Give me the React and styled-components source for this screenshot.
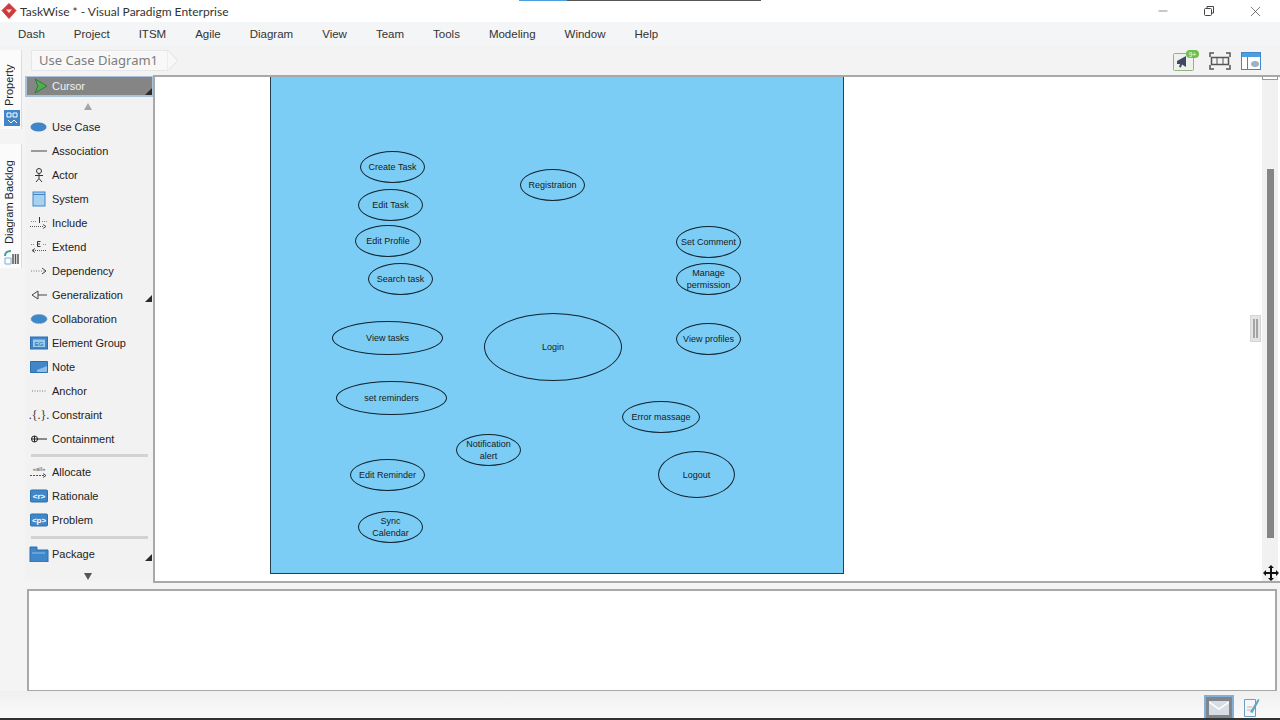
import styled, { createGlobalStyle } from "styled-components";
import { Minus, X } from "lucide-react";

const GlobalStyle = createGlobalStyle`
  html, body { margin: 0; padding: 0; width: 1280px; height: 720px; overflow: hidden; background: #fff; }
  * { box-sizing: border-box; }
  body { font-family: "Liberation Sans", Arial, sans-serif; color: #222; }
`;

const Page = styled.div`
  width: 1280px;
  height: 720px;
  display: flex;
  flex-direction: column;
  overflow: hidden;
  background: #f4f4f4;
`;

const TitleBar = styled.div`
  height: 22px;
  flex: none;
  background: #fff;
  display: flex;
  align-items: center;
  padding-left: 1px;
  position: relative;
`;

const TitleText = styled.span`
  font-family: "Lato", sans-serif;
  font-size: 12px;
  margin-left: 3px;
  color: #333;
`;

const WindowButtons = styled.div`
  margin-left: auto;
  padding-right: 2px;
  display: flex;
  align-items: center;
  color: #444;
`;

const WindowButton = styled.div`
  width: 46px;
  height: 22px;
  display: flex;
  align-items: center;
  justify-content: center;
`;

const ProgressMark = styled.div`
  position: absolute;
  top: 0;
  left: 519px;
  width: 242px;
  height: 1px;
  background: linear-gradient(90deg, #4a9fdc 0 48px, #555 48px);
`;

const MenuBar = styled.div`
  height: 24px;
  flex: none;
  background: #f4f5f6;
  display: flex;
  align-items: center;
  padding-left: 18px;
  gap: 29px;
  font-size: 11.5px;
  color: #333;
`;

const Toolbar = styled.div`
  height: 29px;
  flex: none;
  display: flex;
  align-items: center;
  padding-left: 31px;
  padding-right: 19px;
  background: #f3f3f3;
`;

const Crumb = styled.div`
  height: 21px;
  width: 136px;
  padding: 0 0 2px 7px;
  display: flex;
  align-items: center;
  font-family: "Noto Sans", sans-serif;
  font-size: 13px;
  color: #7d7d7d;
  background: #f8f8f8;
  border: 1px solid #e6e6e6;
  border-right: none;
`;

const CrumbTip = styled.svg`
  width: 11px;
  height: 21px;
  flex: none;
`;

const ToolIcons = styled.div`
  margin-left: auto;
  display: flex;
  align-items: center;
  gap: 10px;
`;

const Body = styled.div`
  height: 506px;
  flex: none;
  display: flex;
`;

const SideTabs = styled.div`
  width: 25px;
  flex: none;
  display: flex;
  flex-direction: column;
  margin-top: -25px;
  gap: 15px;
  position: relative;
  z-index: 1;
`;

const SideTab = styled.div`
  width: 22px;
  height: ${p => p.$h}px;
  background: #fbfbfb;
  border-right: 1px solid #dcdcdc;
  display: flex;
  flex-direction: column;
  align-items: center;
  padding-top: ${p => p.$pad}px;
`;

const SideTabLabel = styled.span`
  writing-mode: vertical-rl;
  transform: rotate(180deg);
  font-size: 11px;
  height: ${p => p.$h}px;
  margin-right: 4px;
  color: #222;
  text-align: left;
  white-space: nowrap;
`;

const TabIcon = styled.svg`
  flex: none;
  margin-top: ${p => p.$top}px;
  margin-left: 2px;
`;

const Palette = styled.div`
  width: 130px;
  flex: none;
  display: flex;
  flex-direction: column;
  background: #f2f2f2;
  border-right: 2px solid #a8a8a8;
`;

const CursorRow = styled.div`
  height: 21px;
  margin-top: 1px;
  flex: none;
  display: flex;
  align-items: center;
  background: #858585;
  border: 2px solid #a9c3dc;
  border-top-width: 1px;
  border-right-width: 1px;
  padding-left: 6px;
  gap: 4px;
  color: #f1f1f1;
  font-size: 11px;
  position: relative;
`;

const Corner = styled.i`
  position: absolute;
  right: ${p => p.$r ?? 0}px;
  bottom: ${p => p.$b ?? 0}px;
  width: 0;
  height: 0;
  border-style: solid;
  border-width: 0 0 7px 7px;
  border-color: transparent transparent #2c2c2c transparent;
`;

const Arrow = styled.div`
  height: ${p => p.$h}px;
  flex: none;
  display: flex;
  align-items: center;
  justify-content: center;
  padding-right: 2px;
`;

const ArrowGlyph = styled.i`
  width: 0;
  height: 0;
  border-left: 4px solid transparent;
  border-right: 4px solid transparent;
  ${p => p.$down ? "border-top: 7px solid #555;" : "border-bottom: 7px solid #a5a5a5;"}
`;

const Item = styled.div`
  height: 24px;
  flex: none;
  display: flex;
  align-items: center;
  font-size: 11px;
  color: #222;
  position: relative;
`;

const ItemIcon = styled.span`
  width: 27px;
  flex: none;
  display: flex;
  justify-content: center;
`;

const Divider = styled.div`
  height: 3px;
  flex: none;
  margin: ${p => p.$m};
  margin-left: 6px;
  margin-right: 5px;
  background: #d2d2d2;
`;

const Canvas = styled.div`
  flex: 1;
  position: relative;
  background: #fff;
  overflow: hidden;
  border-top: 2px solid #a8a8a8;
`;

const SystemBox = styled.div`
  position: absolute;
  left: 115px;
  top: -21px;
  width: 574px;
  height: 518px;
  background: #7bcdf5;
  border: 1px solid #24414f;
`;

const UseCase = styled.div`
  position: absolute;
  left: ${p => p.$x - 155}px;
  top: ${p => p.$y - 77}px;
  width: ${p => p.$w}px;
  height: ${p => p.$h}px;
  border: 1px solid #10232e;
  border-radius: 50%;
  background: #7bcdf5;
  display: flex;
  align-items: center;
  justify-content: center;
  text-align: center;
  white-space: pre-line;
  font-size: 9px;
  line-height: 12px;
  color: #1a1a1a;
`;

const ScrollTrack = styled.div`
  position: absolute;
  right: 2px;
  top: 0;
  bottom: 0;
  width: 16px;
  background: #f1f1f1;
`;

const ScrollThumb = styled.div`
  position: absolute;
  left: 5px;
  top: 92px;
  width: 7px;
  height: 369px;
  background: #858585;
`;

const TopCap = styled.div`
  position: absolute;
  left: 0;
  top: 0;
  width: 16px;
  height: 3px;
  border: 1px solid #999;
  border-top: none;
  background: #fff;
`;

const Grip = styled.div`
  position: absolute;
  left: 1095px;
  top: 238px;
  width: 11px;
  height: 27px;
  background: #e4e4e4;
  border: 1px solid #d5d5d5;
  display: flex;
  justify-content: center;
  gap: 1px;
  padding: 3px 0;
`;

const GripLine = styled.i`
  width: 2px;
  background: #a4a4a4;
`;

const MoveIcon = styled.svg`
  position: absolute;
  right: 1px;
  bottom: 0;
`;

const Gap = styled.div`
  height: 8px;
  flex: none;
  border-top: 2px solid #a8a8a8;
  margin-left: 153px;
  background: #f4f4f4;
`;

const LogRow = styled.div`
  height: 102px;
  flex: none;
  padding-left: 27px;
  padding-right: 3px;
`;

const LogBox = styled.div`
  height: 102px;
  background: #fff;
  border: 2px solid #a8a8a8;
  border-bottom-width: 1px;
`;

const StatusBar = styled.div`
  flex: 1;
  display: flex;
  align-items: flex-end;
  justify-content: flex-end;
  padding-right: 20px;
  gap: 10px;
  background: linear-gradient(#f0f0f0, #fafafa);
  border-bottom: 2px solid #333;
`;

const MailButton = styled.div`
  width: 30px;
  height: 23px;
  background: #80858c;
  border: 2px solid #83aed6;
  border-bottom: none;
  display: flex;
  align-items: center;
  justify-content: center;
`;

const DocIcon = styled.svg`
  margin-bottom: 1px;
`;

const items = [
  ["Use Case", "usecase"],
  ["Association", "line"],
  ["Actor", "actor"],
  ["System", "system"],
  ["Include", "include"],
  ["Extend", "extend"],
  ["Dependency", "dep"],
  ["Generalization", "gen", true],
  ["Collaboration", "collab"],
  ["Element Group", "group"],
  ["Note", "note"],
  ["Anchor", "anchor"],
  ["Constraint", "constraint"],
  ["Containment", "contain"],
];

const nodes = [
  ["Create Task", 360, 151, 65, 32],
  ["Registration", 520, 169, 65, 32],
  ["Edit Task", 358, 189, 65, 32],
  ["Edit Profile", 355, 225, 66, 32],
  ["Set Comment", 676, 226, 65, 32],
  ["Search task", 368, 263, 65, 32],
  ["Manage\npermission", 676, 263, 65, 32],
  ["View tasks", 332, 321, 111, 34],
  ["Login", 484, 313, 138, 68],
  ["View profiles", 676, 323, 65, 32],
  ["set reminders", 336, 381, 111, 34],
  ["Error massage", 622, 401, 78, 32],
  ["Notification\nalert", 456, 434, 65, 32],
  ["Edit Reminder", 350, 459, 75, 32],
  ["Logout", 658, 451, 77, 47],
  ["Sync\nCalendar", 358, 511, 65, 32],
];

const Icon = ({ name }) => {
  const blue = "#3f87c9";
  const props = { width: 20, height: 16, viewBox: "0 0 20 16", fill: "none" };
  switch (name) {
    case "usecase":
      return <svg {...props}><ellipse cx="9.500" cy="8" rx="8" ry="4.500" fill={blue} /></svg>;
    case "line":
      return <svg {...props}><path d="M2 8h16" stroke="#444" /></svg>;
    case "actor":
      return <svg {...props}><circle cx="10" cy="4" r="2.500" stroke="#333" /><path d="M10 6.500v5M6 8.500h8M10 11.500l-3 3.500M10 11.500l3 3.500" stroke="#333" /></svg>;
    case "system":
      return <svg {...props}><rect x="4" y="1" width="12" height="14" fill="#a9d0ef" stroke={blue} /><path d="M4 3.500h12" stroke={blue} /></svg>;
    case "include":
      return <svg {...props}><path d="M1 11.500h14" stroke="#555" strokeDasharray="1 1" /><path d="M14 9.500l3 2-3 2" stroke="#555" /><path d="M10.500 2v6" stroke="#333" /><path d="M2 6.500h5M13 6.500h5" stroke="#888" strokeDasharray="1 1" /></svg>;
    case "extend":
      return <svg {...props}><path d="M4 11.500h14" stroke="#555" strokeDasharray="1 1" /><path d="M6 9.500l-3 2 3 2" stroke="#555" /><path d="M8.500 2.500h3M8.500 2.500v5h3M8.500 5h2.500" stroke="#333" /><path d="M2 5.500h4M14 5.500h4" stroke="#888" strokeDasharray="1 1" /></svg>;
    case "dep":
      return <svg {...props}><path d="M2 8h14" stroke="#777" strokeDasharray="1 1.500" /><path d="M13 5l4 3-4 3" stroke="#444" /></svg>;
    case "gen":
      return <svg {...props}><path d="M9 4L3 8l6 4zM9 8h9" stroke="#444" /></svg>;
    case "collab":
      return <svg {...props}><ellipse cx="10" cy="8" rx="8" ry="4.500" fill={blue} stroke="#6ba4d8" strokeDasharray="1.500 1" /></svg>;
    case "group":
      return <svg {...props}><rect x="1.500" y="2" width="17" height="12" fill={blue} stroke="#2d6fae" /><rect x="4" y="4.500" width="12" height="7.500" fill="#9cc8ec" /><text x="10" y="10.500" fontSize="6" textAnchor="middle" fill="#1f5f99" fontFamily="Liberation Sans">EG</text></svg>;
    case "note":
      return <svg {...props}><path d="M1.500 2.500h17v11h-17z" fill={blue} stroke="#2d6fae" /><path d="M8 11l10-4v6H8z" fill="#8fbfe8" /></svg>;
    case "anchor":
      return <svg {...props}><path d="M3 8h15" stroke="#777" strokeDasharray="1 1.500" /></svg>;
    case "constraint":
      return <svg {...props}><text x="10" y="12" fontSize="12" textAnchor="middle" fill="#333" fontFamily="Liberation Serif">.{"{.}"}.</text></svg>;
    case "contain":
      return <svg {...props}><circle cx="5.500" cy="8" r="3" stroke="#222" /><path d="M2.500 8h6M5.500 5v6M8 8h10" stroke="#222" /></svg>;
    case "allocate":
      return <svg {...props}><text x="10" y="7" fontSize="6" textAnchor="middle" fill="#555" fontFamily="Liberation Sans">{"«all»"}</text><path d="M1 11.500h16" stroke="#555" strokeDasharray="2 1" /><path d="M14 9.500l3 2-3 2" stroke="#555" /></svg>;
    case "rationale":
    case "problem":
      return <svg {...props}><rect x="1.500" y="2" width="17" height="12" rx="1" fill={blue} stroke="#2d6fae" /><text x="10" y="11" fontSize="8" fontWeight="bold" textAnchor="middle" fill="#fff" fontFamily="Liberation Sans">{name === "problem" ? "<p>" : "<r>"}</text></svg>;
    case "package":
      return <svg {...props}><path d="M1 1h7v3h11v12H1z" fill={blue} stroke="#2d6fae" /><path d="M3 7h13" stroke="#8fbfe8" /></svg>;
    default:
      return null;
  }
};

const PaletteItem = ({ label, icon, more }) => (
  <Item>
    <ItemIcon><Icon name={icon} /></ItemIcon>
    {label}
    {more && <Corner $r={1} $b={5} />}
  </Item>
);

export default function App() {
  return (
    <Page>
      <GlobalStyle />
      <TitleBar>
        <svg width="16" height="16" viewBox="0 0 16 16">
          <path d="M8 .500l7 7-7 8-7-8z" fill="#cf3b3a" stroke="#cf3b3a" strokeLinejoin="round" />
          <path d="M5 6.500h6L8 10z" fill="#f7e6e0" />
        </svg>
        <TitleText>TaskWise * - Visual Paradigm Enterprise</TitleText>
        <ProgressMark />
        <WindowButtons>
          <WindowButton><Minus size={14} strokeWidth={1} /></WindowButton>
          <WindowButton>
            <svg width="12" height="12" viewBox="0 0 12 12" fill="none" stroke="#444">
              <rect x="1.500" y="3.500" width="7" height="7" rx="1" />
              <path d="M4 3.500V1.500h6.500V8H8.500" />
            </svg>
          </WindowButton>
          <WindowButton><X size={17} strokeWidth={1} /></WindowButton>
        </WindowButtons>
      </TitleBar>
      <MenuBar>
        {["Dash", "Project", "ITSM", "Agile", "Diagram", "View", "Team", "Tools", "Modeling", "Window", "Help"].map(m => (
          <span key={m}>{m}</span>
        ))}
      </MenuBar>
      <Toolbar>
        <Crumb>Use Case Diagram1</Crumb>
        <CrumbTip viewBox="0 0 11 21">
          <path d="M0 .500h1L10.500 10.500 1 20.500H0z" fill="#f8f8f8" stroke="#e2e2e2" />
        </CrumbTip>
        <ToolIcons>
          <svg width="26" height="22" viewBox="0 0 26 22" fill="none">
            <rect x=".5" y="3.500" width="20" height="17" rx="1" fill="#eef2ea" stroke="#92b283" />
            <path d="M4 11l9-5v11l-4-2.500-1 3-2-.5 1-3H4z" fill="#3d4a63" />
            <rect x="13" y="0" width="13" height="8" rx="4" fill="#6cc04a" />
            <text x="19.500" y="6.500" fontSize="6.500" textAnchor="middle" fill="#fff" fontFamily="Liberation Sans">9+</text>
          </svg>
          <svg width="22" height="18" viewBox="0 0 22 18" fill="none" stroke="#555">
            <path d="M1 5V1h4M17 1h4v4M21 13v4h-4M5 17H1v-4" strokeWidth="1.500" />
            <rect x="2.500" y="5.500" width="17" height="7" strokeWidth="1.500" />
            <path d="M8 5.500v7M14 5.500v7" />
          </svg>
          <svg width="20" height="18" viewBox="0 0 20 18" fill="none">
            <rect x=".5" y=".5" width="19" height="17" fill="#fff" stroke="#3f87c9" />
            <rect x="1" y="1" width="18" height="4" fill="#4a9fe0" />
            <path d="M6.500 5v12" stroke="#3f87c9" />
            <ellipse cx="14" cy="12" rx="4" ry="3" fill="#9ab2c4" />
          </svg>
        </ToolIcons>
      </Toolbar>
      <Body>
        <SideTabs>
          <SideTab $h={79} $pad={6}>
            <SideTabLabel $h={50}>Property</SideTabLabel>
            <TabIcon $top={4} width="16" height="16" viewBox="0 0 16 16">
              <rect width="16" height="16" fill="#3f87c9" />
              <path d="M3 3h4v4H3zM9 3h4v4H9zM4 10l3 3 3-3 3 3" fill="none" stroke="#fff" />
            </TabIcon>
          </SideTab>
          <SideTab $h={124} $pad={12}>
            <SideTabLabel $h={88}>Diagram Backlog</SideTabLabel>
            <TabIcon $top={4} width="18" height="18" viewBox="0 0 18 18" fill="none">
              <path d="M2 8c0-4 3-5 6-5" stroke="#3fa59a" strokeWidth="2" />
              <path d="M2 10h6v6H2z" stroke="#7fb0d8" />
              <path d="M10 6v10M12.500 6v10M15 6v10" stroke="#555" strokeWidth="1.500" />
            </TabIcon>
          </SideTab>
        </SideTabs>
        <Palette>
          <CursorRow>
            <svg width="15" height="16" viewBox="0 0 15 16">
              <path d="M2 1l12 7-12 7 3-7z" fill="#4cb050" stroke="#2f7b34" />
            </svg>
            Cursor
            <Corner />
          </CursorRow>
          <Arrow $h={18}><ArrowGlyph /></Arrow>
          {items.map(([label, icon, more]) => (
            <PaletteItem key={label} label={label} icon={icon} more={more} />
          ))}
          <Divider $m="3px 0 3px" />
          <PaletteItem label="Allocate" icon="allocate" />
          <PaletteItem label="Rationale" icon="rationale" />
          <PaletteItem label="Problem" icon="problem" />
          <Divider $m="4px 0 3px" />
          <PaletteItem label="Package" icon="package" more />
          <Arrow $h={20}><ArrowGlyph $down /></Arrow>
        </Palette>
        <Canvas>
          <SystemBox />
          {nodes.map(([label, x, y, w, h]) => (
            <UseCase key={label} $x={x} $y={y} $w={w} $h={h}>{label}</UseCase>
          ))}
          <ScrollTrack>
            <TopCap />
            <ScrollThumb />
          </ScrollTrack>
          <Grip><GripLine /><GripLine /></Grip>
          <MoveIcon width="16" height="16" viewBox="0 0 16 16">
            <path d="M8 0l3 3H9v4h4V5l3 3-3 3V9H9v4h2l-3 3-3-3h2V9H3v2L0 8l3-3v2h4V3H5z" fill="#111" />
          </MoveIcon>
        </Canvas>
      </Body>
      <Gap />
      <LogRow><LogBox /></LogRow>
      <StatusBar>
        <MailButton>
          <svg width="20" height="14" viewBox="0 0 20 14">
            <rect width="20" height="14" fill="#d7dde3" />
            <path d="M0 1l10 7 10-7" fill="none" stroke="#fff" strokeWidth="1.500" />
          </svg>
        </MailButton>
        <DocIcon width="16" height="20" viewBox="0 0 16 20" fill="none">
          <path d="M.5 2.500h11v17H.5z" fill="#f3f7fa" stroke="#6d9ec6" />
          <path d="M3 10h5M3 13h6" stroke="#d9a6a6" />
          <path d="M6 15L14 2l1.500 1-7 13z" fill="#5aa6c4" />
        </DocIcon>
      </StatusBar>
    </Page>
  );
}
